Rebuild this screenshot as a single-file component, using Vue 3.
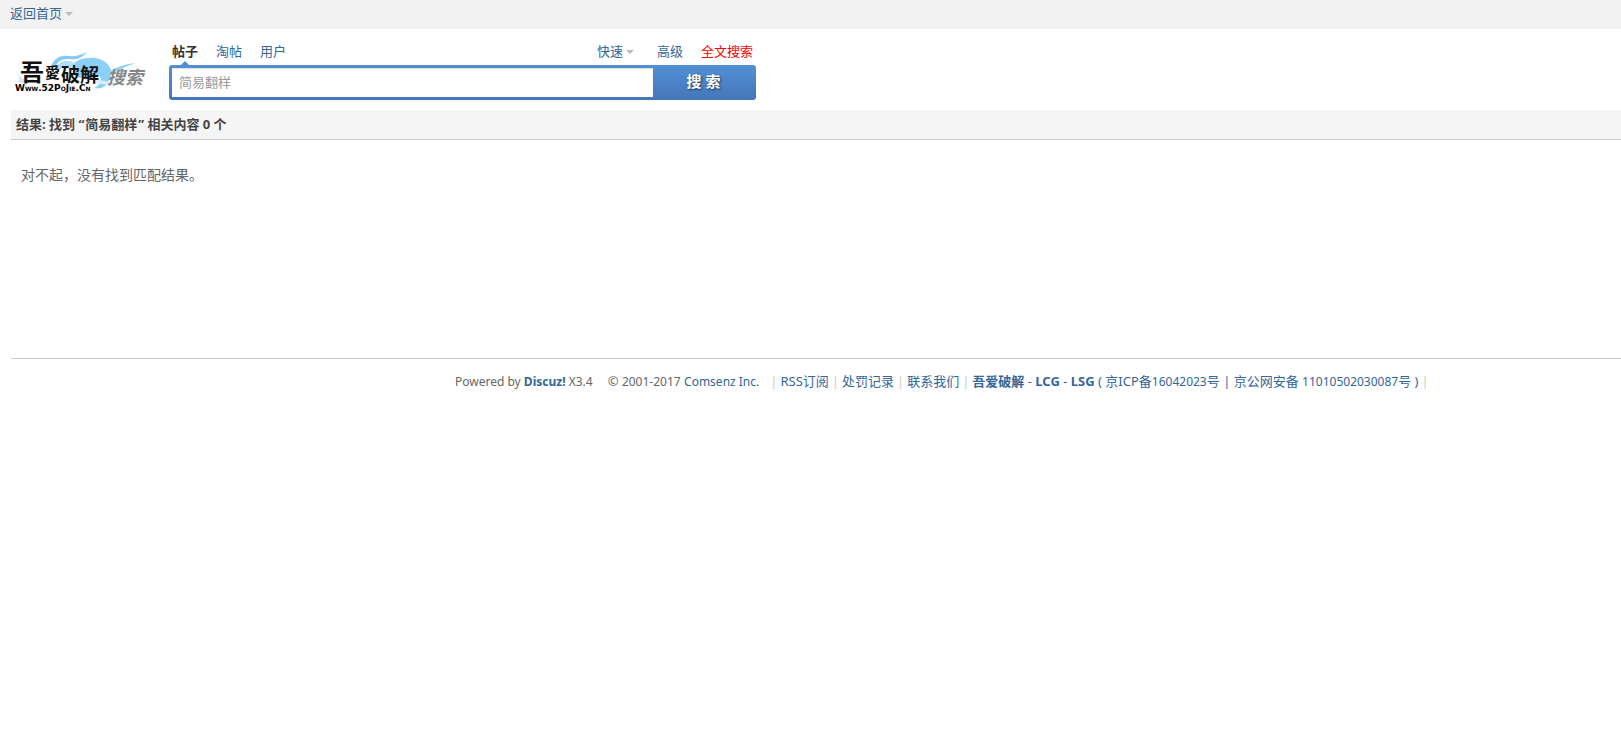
<template>
    <div class="SearchPage">
        <header class="toptb">
            <a href="#" class="arrow">返回首页</a>
        </header>

        <form class="search" @submit.prevent>
            <a href="#" class="logo" aria-label="吾愛破解">
                <svg width="140" height="48" viewBox="0 0 140 48">
                    <path d="M39 21C40 11 48 7 56 8Q66 9 75 4Q68 13 57 11Q47 10 43 19Z" fill="#86cbf7" />
                    <path d="M44 20C47 12 57 11 62 15Q66 18 60 22Q54 18 46 22Z" fill="#b4def9" />
                    <path d="M61 18C64 8 90 6 97 18Q102 24 96 34Q92 42 82 40Q91 36 88 28Q72 33 61 27Z" fill="#8ccff8" />
                    <path d="M97 24Q109 16 124 15Q110 19 99 27Z" fill="#8ccff8" />
                    <path d="M4 25Q14 36 24 29Q17 38 5 34Q10 31 4 25Z" fill="#cfeafa" />
                    <path d="M84 31Q99 35 110 34Q98 39 84 35Z" fill="#d7effb" />
                    <g class="logo-cn">
                        <text x="8" y="33" font-size="24">吾</text>
                        <text x="33" y="30" font-size="15">愛</text>
                        <text x="49" y="34" font-size="19">破解</text>
                    </g>
                    <text class="logo-url" x="3" y="43">Www.52PoJie.Cn</text>
                    <text class="logo-so" x="95" y="36">搜索</text>
                </svg>
            </a>
            <div class="search-main">
                <nav class="tabs">
                    <a v-for="tab in tabs" :key="tab" href="#" :class="{ active: tab === current }" @click.prevent="current = tab">{{ tab }}</a>
                    <span class="tabs-right">
                        <a href="#" class="arrow">快速</a>
                        <a href="#">高级</a>
                        <a href="#" class="full">全文搜索</a>
                    </span>
                </nav>
                <div class="search-box">
                    <input v-model="keyword" type="text" aria-label="搜索内容">
                    <button type="submit">搜 索</button>
                </div>
            </div>
        </form>

        <main class="result">
            <h2>结果: 找到 “<em>简易翻样</em>” 相关内容 0 个</h2>
            <p>对不起，没有找到匹配结果。</p>
        </main>

        <footer class="footer">
            <span class="en">Powered by <a href="#"><strong>Discuz!</strong></a> X3.4</span>
            <span class="copy">© <span class="en">2001-2017</span> <a href="#" class="en">Comsenz Inc.</a></span>
            <i>|</i>
            <template v-for="link in links" :key="link">
                <a href="#">{{ link }}</a>
                <i>|</i>
            </template>
            <span class="site"><a href="#"><strong>吾爱破解</strong></a> - <a href="#"><strong>LCG</strong></a> - <a href="#"><strong>LSG</strong></a> ( <a href="#">京ICP备<span class="en">16042023</span>号</a> | <a href="#">京公网安备 <span class="en">11010502030087</span>号</a> )</span>
            <i>|</i>
        </footer>
    </div>
</template>

<script setup>
import { ref } from 'vue';

const tabs = ['帖子', '淘帖', '用户'];
const current = ref('帖子');
const keyword = ref('简易翻样');
const links = ['RSS订阅', '处罚记录', '联系我们'];
</script>

<style>
body{
    background: white;
}
</style>

<style scoped>
.SearchPage{
    font-family: "Noto Sans", "Noto Sans CJK SC", sans-serif;
    font-size: 13px;
    line-height: 20px;
    color: #666;
}
a{
    color: #369;
    text-decoration: none;
}
.toptb{
    padding: 3px 10px 6px;
    background: #f2f2f2;
}
.arrow::after{
    content: "";
    display: inline-block;
    margin-left: 3px;
    vertical-align: 2px;
    border: 4px solid transparent;
    border-top-color: #bbb;
    border-bottom: 0;
}
.search{
    display: flex;
    padding: 12px 0 10px 12px;
}
.logo{
    width: 157px;
    padding-top: 7px;
}
.logo svg{
    display: block;
}
.logo-cn{
    font-family: "Noto Sans CJK TC", sans-serif;
    font-weight: bold;
    fill: #111;
}
.logo-url{
    font-family: "DejaVu Sans", sans-serif;
    font-size: 9px;
    font-weight: bold;
    font-variant: small-caps;
    fill: #000;
}
.logo-so{
    font-family: "Noto Sans CJK SC", sans-serif;
    font-size: 18px;
    font-weight: bold;
    font-style: italic;
    fill: #888;
}
.search-main{
    width: 587px;
}
.tabs{
    display: flex;
    gap: 18px;
    height: 24px;
    padding: 0 3px;
}
.active{
    position: relative;
    color: #333;
    font-weight: bold;
}
.active::after{
    content: "";
    position: absolute;
    left: 9px;
    bottom: 0;
    border: 4px solid transparent;
    border-bottom-color: #4f8dd0;
    border-top: 0;
}
.tabs-right{
    display: flex;
    gap: 18px;
    margin-left: auto;
}
.tabs-right .arrow{
    margin-right: 5px;
}
.full{
    color: red;
}
.search-box{
    display: flex;
    height: 35px;
    border-radius: 3px;
    background: linear-gradient(#5190d5, #4477b8);
}
.search-box input{
    flex: 1;
    min-width: 0;
    margin: 3px 0 3px 3px;
    padding: 0 7px 2px;
    border: none;
    box-shadow: inset 0 1px 1px #ddd;
    background-color: white;
    font: inherit;
    color: #999;
    outline: none;
}
.search-box button{
    width: 103px;
    padding: 0 2px 3px 0;
    border: none;
    background: none;
    color: white;
    font: inherit;
    font-size: 15px;
    font-weight: bold;
    text-shadow: 1px 1px 2px #234;
    cursor: pointer;
}
.result{
    margin-left: 11px;
    min-height: 248px;
    border-bottom: 1px solid #ccc;
}
.result h2{
    margin: 0;
    padding: 4px 5px 5px;
    border-bottom: 1px solid #ccc;
    background: #f5f5f5;
    font-size: 13px;
    color: #444;
}
.result em{
    margin: 0 1px;
    font-style: normal;
}
.result p{
    margin: 0;
    padding: 25px 10px;
    font-size: 14px;
}
.footer{
    display: flex;
    align-items: baseline;
    padding: 12px 0 12px 455px;
    white-space: nowrap;
}
.en{
    font-size: 12px;
}
.copy{
    margin: 0 8px 0 15px;
}
.footer i{
    margin: 0 3px;
    font-style: normal;
    color: #ccc;
}
.site{
    color: #369;
}
</style>
